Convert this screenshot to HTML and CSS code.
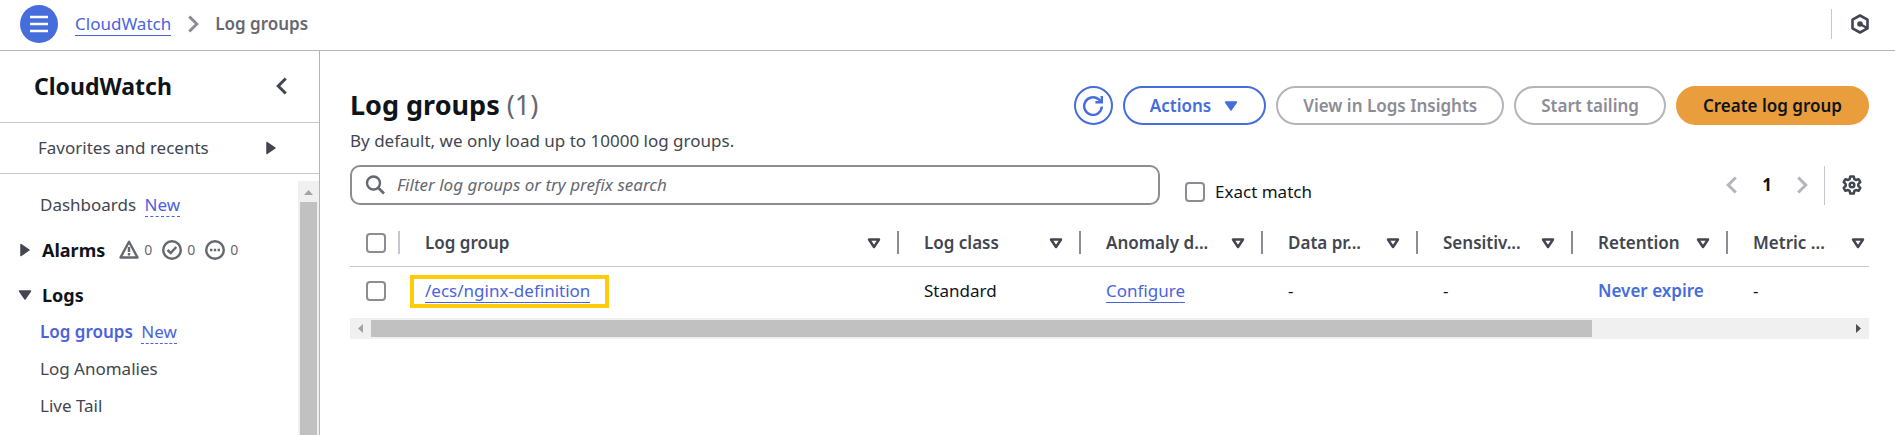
FILE: index.html
```html
<!DOCTYPE html>
<html lang="en">
<head>
    <meta charset="UTF-8">
    <meta name="viewport" content="width=device-width, initial-scale=1.0">
    <title>CloudWatch - Log groups</title>
    <link rel="stylesheet" href="styles.css">
</head>
<body>
    <svg class="defs" aria-hidden="true">
        <symbol id="filter" viewBox="0 0 16 16">
            <path d="M3 4.500h10L8 12z" fill="none" stroke="currentColor" stroke-width="2.500" stroke-linejoin="round"/>
        </symbol>
        <symbol id="caret" viewBox="0 0 16 16">
            <path d="M2.500 4h11L8 12z" fill="currentColor" stroke="currentColor" stroke-width="1.500" stroke-linejoin="round"/>
        </symbol>
        <symbol id="chevron" viewBox="0 0 16 16">
            <path d="M5 2l6 6-6 6" fill="none" stroke="currentColor" stroke-width="2.400"/>
        </symbol>
    </svg>
    <header class="topbar">
        <button class="menu" type="button" aria-label="Menu">
            <svg viewBox="0 0 18 18"><path d="M0 2h18M0 9h18M0 16h18" stroke="currentColor" stroke-width="2.400"/></svg>
        </button>
        <nav class="crumbs">
            <a class="link" href="#">CloudWatch</a>
            <svg class="icon crumbArrow"><use href="#chevron"/></svg>
            <span class="current">Log groups</span>
        </nav>
        <button class="tools" type="button" aria-label="Diagnostics">
            <svg class="icon" viewBox="0 0 20 20">
                <path d="M10 1.500l7.500 4.200v8.600L10 18.500l-7.500-4.200V5.700z" fill="none" stroke="currentColor" stroke-width="2.600" stroke-linejoin="round"/>
                <circle cx="10" cy="10" r="2.800" fill="currentColor"/>
                <path d="M10 10l7 4" stroke="currentColor" stroke-width="2.400"/>
            </svg>
        </button>
    </header>
    <div class="layout">
        <aside class="sidebar">
            <div class="sideHead">
                <h2>CloudWatch</h2>
                <button class="plain" type="button" aria-label="Close navigation"><svg class="icon flip"><use href="#chevron"/></svg></button>
            </div>
            <button class="favorites" type="button">
                Favorites and recents
                <svg class="tri right"><use href="#caret"/></svg>
            </button>
            <div class="sideBody">
                <ul class="nav">
                    <li><a href="#">Dashboards</a> <a class="new" href="#">New</a></li>
                    <li class="section">
                        <svg class="tri right"><use href="#caret"/></svg>
                        <a href="#">Alarms</a>
                        <span class="status">
                            <svg class="icon" viewBox="0 0 20 20" fill="none" stroke="currentColor" stroke-width="2.400" stroke-linejoin="round"><path d="M10 1.800L1.500 17.500h17z"/><path d="M10 7v5M10 13v2.500"/></svg>0
                            <svg class="icon" viewBox="0 0 20 20" fill="none" stroke="currentColor" stroke-width="2.400"><circle cx="10" cy="10" r="8.800"/><path d="M5.500 10l3.200 3 5.600-6"/></svg>0
                            <svg class="icon" viewBox="0 0 20 20" fill="none" stroke="currentColor" stroke-width="2.400"><circle cx="10" cy="10" r="8.800"/><path d="M5 10h2.400M8.800 10h2.400M12.600 10H15"/></svg>0
                        </span>
                    </li>
                    <li class="section">
                        <svg class="tri"><use href="#caret"/></svg>
                        <a href="#">Logs</a>
                    </li>
                    <li><a class="active" href="#">Log groups</a> <a class="new" href="#">New</a></li>
                    <li><a href="#">Log Anomalies</a></li>
                    <li><a href="#">Live Tail</a></li>
                </ul>
                <div class="vscroll">
                    <svg class="arrow" viewBox="0 0 21 21"><path d="M6 14h9l-4.500-5z" fill="#a3a3a3"/></svg>
                    <span class="thumb"></span>
                </div>
            </div>
        </aside>
        <main class="content">
            <div class="head">
                <h1>Log groups <span class="count">(1)</span></h1>
                <div class="actions">
                    <button class="btn round" type="button" aria-label="Refresh">
                        <svg class="icon" viewBox="0 0 20 20" fill="none" stroke="currentColor" stroke-width="2.400"><path d="M18.800 10.500A8.800 8.800 0 1 1 15.500 3.200L18 5.500"/><path d="M18.800 0v6.200h-6.400"/></svg>
                    </button>
                    <button class="btn" type="button">Actions <svg class="tri"><use href="#caret"/></svg></button>
                    <button class="btn" type="button" disabled>View in Logs Insights</button>
                    <button class="btn" type="button" disabled>Start tailing</button>
                    <button class="btn primary" type="button">Create log group</button>
                </div>
            </div>
            <p class="desc">By default, we only load up to 10000 log groups.</p>
            <div class="filters">
                <label class="search">
                    <svg class="icon" viewBox="0 0 20 20" fill="none" stroke="currentColor"><circle cx="8.500" cy="8" r="6.500" stroke-width="2.400"/><path d="M13 12.500L19 18.500" stroke-width="2.600"/></svg>
                    <input type="text" placeholder="Filter log groups or try prefix search" aria-label="Filter log groups">
                </label>
                <label class="exact"><input class="check" type="checkbox"> Exact match</label>
                <div class="pager">
                    <button class="plain" type="button" aria-label="Previous page" disabled><svg class="icon flip"><use href="#chevron"/></svg></button>
                    <button class="plain page" type="button">1</button>
                    <button class="plain" type="button" aria-label="Next page" disabled><svg class="icon"><use href="#chevron"/></svg></button>
                </div>
                <button class="settings" type="button" aria-label="Preferences">
                    <svg class="icon" viewBox="0 0 20 20" fill="none" stroke="currentColor" stroke-width="2.500" stroke-linejoin="round"><path d="M8.300 1.400h3.400l.7 2.700 1.500.9 2.700-.8 1.700 3-2 1.900v1.800l2 1.900-1.700 3-2.700-.8-1.500.9-.7 2.700H8.300l-.7-2.700-1.500-.9-2.700.8-1.700-3 2-1.900V9.100l-2-1.900 1.700-3 2.700.8 1.500-.9z"/><circle cx="10" cy="10" r="2.300"/></svg>
                </button>
            </div>
            <table class="groups">
                <colgroup>
                    <col class="cCheck"><col><col class="cWide"><col class="cWide"><col class="cMid"><col class="cMid"><col class="cMid"><col class="cLast">
                </colgroup>
                <thead>
                    <tr>
                        <th><input class="check" type="checkbox" aria-label="Select all"></th>
                        <th><div class="cell"><span>Log group</span><svg class="tri"><use href="#filter"/></svg></div></th>
                        <th><div class="cell"><span>Log class</span><svg class="tri"><use href="#filter"/></svg></div></th>
                        <th><div class="cell"><span>Anomaly d...</span><svg class="tri"><use href="#filter"/></svg></div></th>
                        <th><div class="cell"><span>Data pr...</span><svg class="tri"><use href="#filter"/></svg></div></th>
                        <th><div class="cell"><span>Sensitiv...</span><svg class="tri"><use href="#filter"/></svg></div></th>
                        <th><div class="cell"><span>Retention</span><svg class="tri"><use href="#filter"/></svg></div></th>
                        <th><div class="cell"><span>Metric ...</span><svg class="tri"><use href="#filter"/></svg></div></th>
                    </tr>
                </thead>
                <tbody>
                    <tr>
                        <td><input class="check" type="checkbox" aria-label="Select /ecs/nginx-definition"></td>
                        <td class="marked"><span class="mark"><a class="link" href="#">/ecs/nginx-definition</a></span></td>
                        <td>Standard</td>
                        <td><a class="link" href="#">Configure</a></td>
                        <td>-</td>
                        <td>-</td>
                        <td><a class="bold" href="#">Never expire</a></td>
                        <td>-</td>
                    </tr>
                </tbody>
            </table>
            <div class="hscroll">
                <svg class="arrow" viewBox="0 0 21 21"><path d="M13 6v9l-5-4.500z" fill="#a3a3a3"/></svg>
                <div class="track"><span class="thumb"></span></div>
                <svg class="arrow" viewBox="0 0 21 21"><path d="M8 6v9l5-4.500z" fill="#505050"/></svg>
            </div>
        </main>
    </div>
</body>
</html>
```
FILE: styles.css
```css
*{
    margin: 0;
    padding: 0;
    box-sizing: border-box;
}
body{
    height: 100vh;
    display: flex;
    flex-direction: column;
    overflow: hidden;
    font: 17px/24px "Noto Sans", "Open Sans", sans-serif;
    color: #0f141a;
    background: #fff;
}
button, input{
    font: inherit;
    color: inherit;
}
button{
    border: 0;
    background: none;
    cursor: pointer;
}
a{
    color: inherit;
    text-decoration: none;
}
.defs{
    position: absolute;
    width: 0;
    height: 0;
}
.icon{
    display: block;
    flex: none;
    width: 20px;
    height: 20px;
}
.tri{
    display: block;
    flex: none;
    width: 16px;
    height: 16px;
}
.right{
    transform: rotate(-90deg);
}
.flip{
    transform: scaleX(-1);
}
.link{
    display: inline-block;
    line-height: 22px;
    color: #4a63dd;
    border-bottom: 1px solid #4a63dd;
}

/* top bar */
.topbar{
    display: flex;
    align-items: center;
    flex: none;
    height: 51px;
    padding: 0 20px 2px;
    border-bottom: 1px solid #b4b4bb;
}
.menu{
    display: flex;
    align-items: center;
    justify-content: center;
    width: 38px;
    height: 38px;
    border-radius: 50%;
    color: #fff;
    background: #456ddb;
}
.menu svg{
    width: 18px;
    height: 18px;
}
.crumbs{
    display: flex;
    align-items: center;
    flex: 1;
    gap: 12px;
    padding-left: 17px;
}
.crumbs .crumbArrow{
    color: #8c8c94;
}
.crumbs .current{
    font-weight: 600;
    color: #656871;
}
.tools{
    height: 30px;
    padding: 5px 5px 5px 18px;
    border-left: 1px solid #c6c6cd;
    color: #424650;
}

.layout{
    display: flex;
    flex: 1;
    min-height: 0;
}

/* side navigation */
.sidebar{
    display: flex;
    flex-direction: column;
    flex: none;
    width: 320px;
    border-right: 1px solid #b4b4bb;
}
.sideHead{
    display: flex;
    align-items: center;
    justify-content: space-between;
    height: 72px;
    padding: 0 27px 2px 34px;
    border-bottom: 1px solid #c6c6cd;
    color: #424650;
}
.sideHead h2{
    font-size: 23px;
    line-height: 28px;
    color: #0f141a;
}
.favorites{
    display: flex;
    align-items: center;
    justify-content: space-between;
    height: 51px;
    padding: 0 40px 0 38px;
    border-bottom: 1px solid #c6c6cd;
    color: #424650;
}
.sideBody{
    display: flex;
    flex: 1;
    min-height: 0;
}
.nav{
    display: flex;
    flex-direction: column;
    gap: 13px;
    flex: 1;
    padding: 19px 0 0 40px;
    list-style: none;
    color: #424650;
}
.nav .new{
    display: inline-block;
    margin-left: 4px;
    line-height: 22px;
    color: #4a63dd;
    border-bottom: 1px dashed #4a63dd;
}
.nav .active{
    font-weight: 600;
    color: #4a63dd;
}
.nav .section{
    display: flex;
    align-items: center;
    gap: 9px;
    margin: 8px 0 0 -23px;
}
.nav .section a{
    font-size: 18px;
    font-weight: 700;
    color: #0f141a;
}
.nav .status{
    display: flex;
    align-items: center;
    gap: 5px;
    padding-left: 5px;
    font-size: 14px;
    color: #656871;
}
.nav .status .icon + .icon{
    margin-left: 5px;
}
.vscroll{
    display: flex;
    flex-direction: column;
    width: 21px;
    margin-top: 7px;
    padding: 0 2px;
    background: #f0f0f0;
}
.arrow{
    display: block;
    flex: none;
    width: 21px;
    height: 21px;
}
.vscroll .arrow{
    margin-left: -2px;
}
.vscroll .thumb{
    flex: 1;
    background: #c1c1c1;
}

/* log groups */
.content{
    flex: 1;
    min-width: 0;
    padding: 35px 26px 0 30px;
}
.head{
    display: flex;
    align-items: center;
    justify-content: space-between;
}
.head h1{
    padding-bottom: 2px;
    font-size: 27px;
    line-height: 37px;
}
.head .count{
    font-weight: 400;
    color: #656871;
}
.actions{
    display: flex;
    gap: 10px;
}
.btn{
    display: flex;
    align-items: center;
    gap: 12px;
    height: 39px;
    padding: 0 25px;
    border: 2px solid #456ddb;
    border-radius: 20px;
    font-weight: 600;
    color: #456ddb;
}
.btn:disabled{
    border-color: #b4b4bb;
    color: #8c8c94;
}
.btn.round{
    justify-content: center;
    width: 39px;
    padding: 0;
}
.btn.primary{
    border-color: #e99d3c;
    color: #0f141a;
    background: #e99d3c;
}
.desc{
    padding: 4px 0 12px;
    color: #424650;
}
.filters{
    display: flex;
    align-items: center;
    height: 40px;
}
.search{
    display: flex;
    align-items: center;
    gap: 12px;
    width: 810px;
    height: 40px;
    padding: 0 13px;
    border: 2px solid #8c8c94;
    border-radius: 10px;
    color: #656871;
}
.search input{
    flex: 1;
    min-width: 0;
    border: 0;
    outline: 0;
    background: none;
}
.search input::placeholder{
    font-style: italic;
    color: #656871;
    opacity: 1;
}
.check{
    appearance: none;
    display: block;
    flex: none;
    width: 20px;
    height: 20px;
    border: 2px solid #8c8c94;
    border-radius: 4px;
    background: #fff;
}
.check:checked{
    background: #456ddb;
}
.exact{
    display: flex;
    align-items: center;
    gap: 10px;
    padding: 14px 0 0 25px;
}
.pager{
    display: flex;
    align-items: center;
    gap: 10px;
    margin-left: auto;
    padding-right: 12px;
}
.plain:disabled{
    color: #b4b4bb;
}
.page{
    width: 30px;
    font-weight: 700;
}
.settings{
    height: 39px;
    padding: 0 7px 0 17px;
    border-left: 1px solid #c6c6cd;
    color: #424650;
}

.groups{
    width: 100%;
    margin-top: 15px;
    table-layout: fixed;
    border-collapse: collapse;
}
.cCheck{
    width: 50px;
}
.cWide{
    width: 182px;
}
.cMid{
    width: 155px;
}
.cLast{
    width: 141px;
}
.groups th{
    height: 46px;
    font-weight: 600;
    text-align: left;
    color: #424650;
    border-bottom: 1px solid #c6c6cd;
}
.groups th:first-child{
    background: linear-gradient(#c6c6cd, #c6c6cd) right center / 2px 23px no-repeat;
}
.groups th:first-child, .groups td:first-child{
    padding-left: 16px;
}
.cell{
    display: flex;
    align-items: center;
    justify-content: space-between;
    gap: 6px;
    height: 23px;
    padding: 0 15px 0 25px;
    border-right: 2px solid #8c8c94;
}
.groups th:last-child .cell{
    padding-right: 3px;
    border-right: 0;
}
.cell span{
    white-space: nowrap;
}
.groups td{
    height: 52px;
    padding: 0 0 2px 25px;
}
.groups .marked{
    padding: 0 0 1px 10px;
}
.mark{
    display: inline-block;
    padding: 0 15px 1px 11px;
    border: 4px solid #ffcc0a;
}
.groups .bold{
    font-weight: 600;
    color: #456ddb;
}
.hscroll{
    display: flex;
    height: 21px;
    background: #f0f0f0;
}
.track{
    flex: 1;
    padding: 2px 0;
}
.track .thumb{
    display: block;
    width: 82.7%;
    height: 17px;
    background: #c1c1c1;
}
```
